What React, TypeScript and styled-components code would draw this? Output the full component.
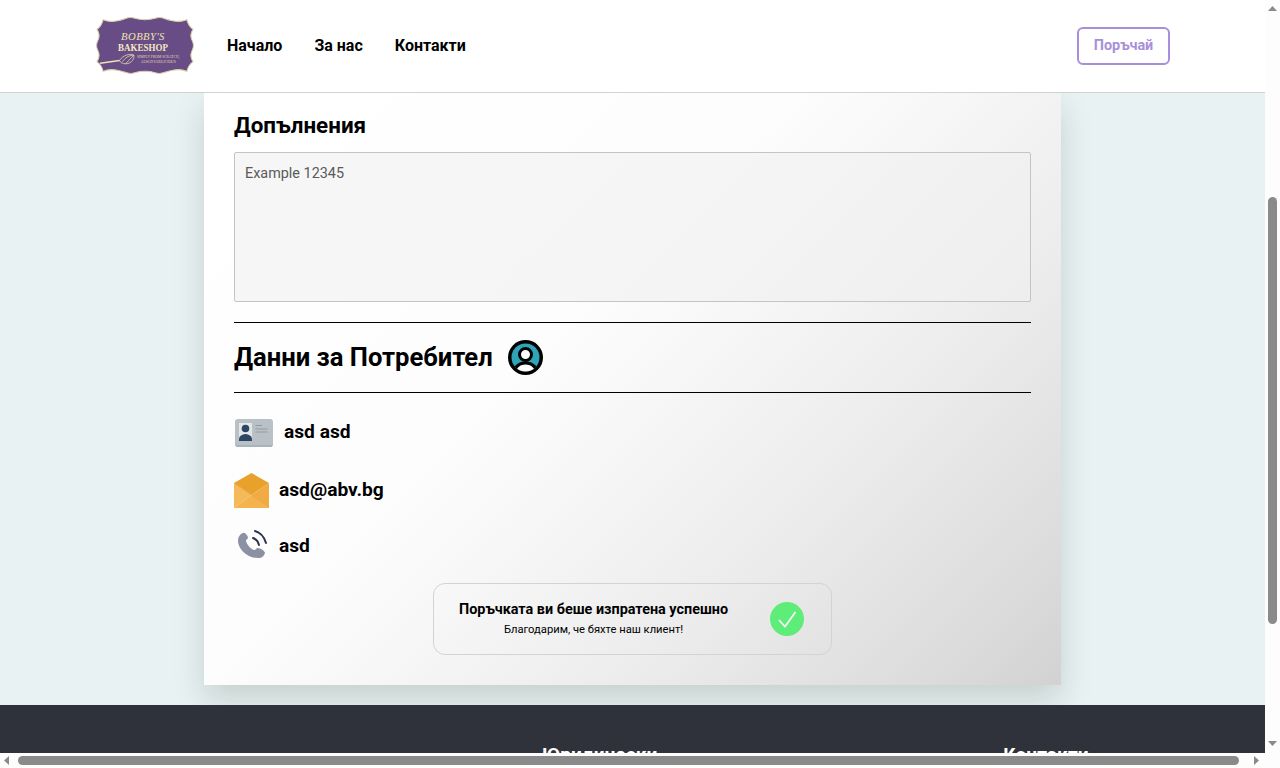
import React from "react";
import styled, { createGlobalStyle } from "styled-components";

const GlobalStyle = createGlobalStyle`
  html, body {
    margin: 0;
    height: 100%;
    overflow: hidden;
  }
  body {
    font-family: Roboto, "Liberation Sans", sans-serif;
    color: #000;
  }
`;

const Shell = styled.div`
  display: grid;
  grid-template-columns: 1fr 15px;
  grid-template-rows: 1fr 15px;
  width: 1280px;
  height: 768px;
  background: #fdfdfd;
`;

const Viewport = styled.div`
  overflow: hidden;
  background: #e9f2f3;
  display: flex;
  flex-direction: column;
`;

const Header = styled.header`
  position: relative;
  z-index: 2;
  flex: none;
  height: 90px;
  background: #fff;
  border-bottom: 1px solid #d2d2d2;
  display: flex;
  align-items: center;
  padding: 0 95px 2px 96px;
`;

const Nav = styled.nav`
  display: flex;
  gap: 32px;
  margin-left: 33px;
  flex: 1;
`;

const NavLink = styled.a`
  font-size: 16px;
  font-weight: 700;
  color: #000;
  text-decoration: none;
`;

const OrderButton = styled.button`
  width: 93px;
  height: 38px;
  margin-top: 2px;
  border: 2px solid #a78fdb;
  border-radius: 6px;
  background: #fff;
  color: #a78fdb;
  font: 700 14.4px Roboto, sans-serif;
  padding: 0 0 2px;
`;

const Main = styled.main`
  flex: none;
  display: flex;
  justify-content: center;
  padding-bottom: 20px;
`;

const Card = styled.section`
  width: 857px;
  box-sizing: border-box;
  padding: 19px 30px 30px;
  background: linear-gradient(
    135deg,
    #ffffff 0%,
    #fdfdfd 40%,
    #f8f8f8 50%,
    #f2f2f2 60%,
    #ececec 70%,
    #e4e4e4 80%,
    #dcdcdc 90%,
    #d2d2d2 100%
  );
  box-shadow: 0 15px 30px rgba(0, 30, 10, 0.15);
`;

const SectionTitle = styled.h2`
  margin: 0 0 14px;
  font-size: 22.4px;
  line-height: 26px;
  font-weight: 700;
`;

const Notes = styled.textarea`
  display: block;
  width: 100%;
  height: 150px;
  box-sizing: border-box;
  margin: 0 0 20px;
  padding: 12px 10px;
  border: 1px solid #c4c4c4;
  border-radius: 2px;
  background: rgba(240, 240, 240, 0.6);
  resize: none;
  font: 400 14.4px Roboto, sans-serif;

  &::placeholder {
    color: #5a5a5a;
    opacity: 1;
  }
`;

const TitleRow = styled.div`
  height: 69px;
  display: flex;
  align-items: center;
  gap: 15px;
  border-top: 1px solid #000;
  border-bottom: 1px solid #000;
`;

const BigTitle = styled.h1`
  margin: 0;
  padding-bottom: 2px;
  font-size: 25.6px;
  font-weight: 700;
`;

const InfoRow = styled.div<{ $gap: number; $top: number; $left?: number }>`
  display: flex;
  align-items: center;
  gap: ${(p) => p.$gap}px;
  margin-top: ${(p) => p.$top}px;
  padding-left: ${(p) => p.$left ?? 0}px;
  font-size: 19.2px;
  font-weight: 700;
  line-height: 22px;
`;

const InfoText = styled.span<{ $low?: boolean }>`
  padding: ${(p) => (p.$low ? "2px 0 0" : "0 0 2px")};
`;

const Toast = styled.div`
  width: 399px;
  height: 72px;
  box-sizing: border-box;
  margin: 23px auto 0;
  padding: 0 27px 0 25px;
  display: flex;
  align-items: center;
  justify-content: space-between;
  border: 1px solid #d3d3d3;
  border-radius: 12px;
`;

const ToastText = styled.div`
  text-align: center;
  padding-bottom: 2px;
`;

const ToastTitle = styled.div`
  font-size: 14.4px;
  font-weight: 700;
  line-height: 17px;
`;

const ToastSub = styled.div`
  font-size: 11.2px;
  line-height: 13px;
  margin-top: 5px;
`;

const Footer = styled.footer`
  flex: none;
  height: 200px;
  background: #2f323a;
  color: #fff;
  display: flex;
  padding: 38px 0 0 542px;
  gap: 346px;
  font-size: 19.2px;
  font-weight: 700;
`;

const VTrack = styled.div`
  position: relative;
  background: #fdfdfd;
`;

const VThumb = styled.div`
  position: absolute;
  left: 3px;
  top: 197px;
  width: 9px;
  height: 427px;
  border-radius: 5px;
  background: #8a8a8a;
`;

const HTrack = styled.div`
  position: relative;
  background: #fdfdfd;
  grid-column: 1 / span 2;
`;

const HThumb = styled.div`
  position: absolute;
  left: 18px;
  top: 3px;
  width: 1221px;
  height: 9px;
  border-radius: 5px;
  background: #8a8a8a;
`;

const Arrow = styled.svg<{ $x: number; $y: number }>`
  position: absolute;
  left: ${(p) => p.$x}px;
  top: ${(p) => p.$y}px;
`;

const Logo = () => (
  <svg width="98" height="57" viewBox="1 2.5 96 53" preserveAspectRatio="none">
    <path
      d="M8 5 C13 7 17 7 22 6 C28 5 31 3 35 3 C39 3 40 5 49 5 C58 5 59 3 63 3 C67 3 70 5 76 6 C81 7 85 7 90 5 C91 9 93 12 96 14 C94 17 93 20 95 24 C97 28 97 30 95 34 C93 38 94 41 96 44 C93 46 91 49 90 53 C85 51 81 51 76 52 C70 53 67 55 63 55 C59 55 58 53 49 53 C40 53 39 55 35 55 C31 55 28 53 22 52 C17 51 13 51 8 53 C7 49 5 46 2 44 C4 41 5 38 3 34 C1 30 1 28 3 24 C5 20 4 17 2 14 C5 12 7 9 8 5 Z"
      fill="#684c86"
      stroke="#d9cfa8"
      strokeWidth="1"
    />
    <text x="47" y="24" textAnchor="middle" fill="#efe3b0" fontFamily="Liberation Serif, serif" fontStyle="italic" fontSize="10.5" letterSpacing="0.4">
      BOBBY'S
    </text>
    <text x="47" y="34" textAnchor="middle" fill="#f3e9c2" fontFamily="Liberation Serif, serif" fontWeight="700" fontSize="8.8">
      BAKESHOP
    </text>
    <text x="62" y="41" textAnchor="middle" fill="#e6dbb0" fontFamily="Liberation Serif, serif" fontSize="3.6">
      SIMPLY FROM SCRATCH,
    </text>
    <text x="62" y="45" textAnchor="middle" fill="#e6dbb0" fontFamily="Liberation Serif, serif" fontSize="3.6">
      ALWAYS DELICIOUS
    </text>
    <path d="M5 45.5 L24 43" stroke="#efe3b0" strokeWidth="1.4" />
    <path d="M24 43 C27 38 35 36 38 38 C39 41 36 46 30 46 C27 46 25 45 24 43 Z M27 44 C29 41 33 38 38 38 M30 46 C32 44 35 41 38 38" fill="none" stroke="#efe3b0" strokeWidth="0.7" />
  </svg>
);

const UserIcon = () => (
  <svg width="35" height="35" viewBox="0 0 35 35">
    <defs>
      <clipPath id="ring-inner">
        <circle cx="17.5" cy="17.5" r="14" />
      </clipPath>
    </defs>
    <circle cx="17.5" cy="17.5" r="17.5" fill="#000" />
    <circle cx="17.5" cy="17.5" r="14" fill="#2fa3b8" />
    <g clipPath="url(#ring-inner)">
      <path d="M4 34 C5 25 11 21.5 17.5 21.5 C24 21.5 30 25 31 34 Z" fill="#000" />
      <path d="M7.5 34 C8 28 12 24.5 17.5 24.5 C23 24.5 27 28 27.5 34 Z" fill="#fff" />
    </g>
    <circle cx="17.5" cy="14.5" r="6" fill="#fff" stroke="#000" strokeWidth="3" />
  </svg>
);

const IdIcon = () => (
  <svg width="38" height="28" viewBox="0 0 38 28">
    <rect x="0" y="0" width="38" height="28" rx="3" fill="#b9c1c6" />
    <path d="M0 26 H38 A3 3 0 0 1 35 28 H3 A3 3 0 0 1 0 26 Z" fill="#a5b5b8" />
    <rect x="4" y="4" width="13" height="18" fill="#e4e7ea" />
    <circle cx="10.5" cy="9.5" r="3.8" fill="#2c4763" />
    <path d="M4 22 V20 C4.5 16.5 7 15.5 10.5 15 C14 15.5 16.5 16.5 17 20 V22 Z" fill="#2c4763" />
    <path d="M20.5 6.5 H27 M20.5 10 H32.5 M20.5 13 H32.5" stroke="#8f9ba1" strokeWidth="1.2" />
  </svg>
);

const MailIcon = () => (
  <svg width="35" height="35" viewBox="0 0 35 35">
    <path d="M0 10 L17.5 0 L35 10 L17.5 22 Z" fill="#e8a22c" />
    <path d="M0 10 L17.5 22 L0 35 Z" fill="#f6b958" />
    <path d="M35 10 L35 35 L17.5 22 Z" fill="#f2ab42" />
    <path d="M0 35 L17.5 22 L35 35 Z" fill="#f5b34d" />
    <path d="M0 10 L35 34.5" stroke="#d2922f" strokeWidth="0.6" opacity="0.7" />
  </svg>
);

const PhoneIcon = () => (
  <svg width="30" height="30" viewBox="0 0 30 30">
    <path
      d="M5 3 C2 4 0 7 0 11 C0 18 8 28 20 28 C24 28 26 26 27 23 C27 21 22 18 20 18 C18 18 18 20 16 20 C13 19 9 15 8 11 C8 9 10 9 10 8 C10 6 7 2 5 3 Z"
      fill="#8b90a3"
    />
    <path d="M15 8 C18 9 20 11 21 15" fill="none" stroke="#2c3250" strokeWidth="2" strokeLinecap="round" />
    <path d="M17 1 C21 2 26 6 28 13" fill="none" stroke="#2c3250" strokeWidth="2" strokeLinecap="round" />
  </svg>
);

const CheckIcon = () => (
  <svg width="34" height="34" viewBox="0 0 34 34">
    <circle cx="17" cy="17" r="17" fill="#5eed78" />
    <path d="M9 18 L15 24.5 L25.5 10" fill="none" stroke="#f2f7f2" strokeWidth="1.8" />
  </svg>
);

export default function App() {
  return (
    <>
      <GlobalStyle />
      <Shell>
        <Viewport>
          <Header>
            <Logo />
            <Nav>
              <NavLink href="#">Начало</NavLink>
              <NavLink href="#">За нас</NavLink>
              <NavLink href="#">Контакти</NavLink>
            </Nav>
            <OrderButton>Поръчай</OrderButton>
          </Header>
          <Main>
            <Card>
              <SectionTitle>Допълнения</SectionTitle>
              <Notes placeholder="Example 12345" />
              <TitleRow>
                <BigTitle>Данни за Потребител</BigTitle>
                <UserIcon />
              </TitleRow>
              <InfoRow $gap={11} $top={26} $left={1}>
                <IdIcon />
                <InfoText>asd asd</InfoText>
              </InfoRow>
              <InfoRow $gap={10} $top={26}>
                <MailIcon />
                <InfoText>asd@abv.bg</InfoText>
              </InfoRow>
              <InfoRow $gap={11} $top={22} $left={4}>
                <PhoneIcon />
                <InfoText $low>asd</InfoText>
              </InfoRow>
              <Toast>
                <ToastText>
                  <ToastTitle>Поръчката ви беше изпратена успешно</ToastTitle>
                  <ToastSub>Благодарим, че бяхте наш клиент!</ToastSub>
                </ToastText>
                <CheckIcon />
              </Toast>
            </Card>
          </Main>
          <Footer>
            <span>Юридически</span>
            <span>Контакти</span>
          </Footer>
        </Viewport>
        <VTrack>
          <Arrow $x={3} $y={6} width="9" height="5" viewBox="0 0 9 5">
            <path d="M4.5 0 L9 5 H0 Z" fill="#8a8a8a" />
          </Arrow>
          <VThumb />
          <Arrow $x={3} $y={741} width="9" height="5" viewBox="0 0 9 5">
            <path d="M0 0 H9 L4.5 5 Z" fill="#8a8a8a" />
          </Arrow>
        </VTrack>
        <HTrack>
          <Arrow $x={4} $y={3} width="5" height="9" viewBox="0 0 5 9">
            <path d="M5 0 V9 L0 4.5 Z" fill="#8a8a8a" />
          </Arrow>
          <HThumb />
          <Arrow $x={1254} $y={3} width="5" height="9" viewBox="0 0 5 9">
            <path d="M0 0 L5 4.5 L0 9 Z" fill="#8a8a8a" />
          </Arrow>
        </HTrack>
      </Shell>
    </>
  );
}
